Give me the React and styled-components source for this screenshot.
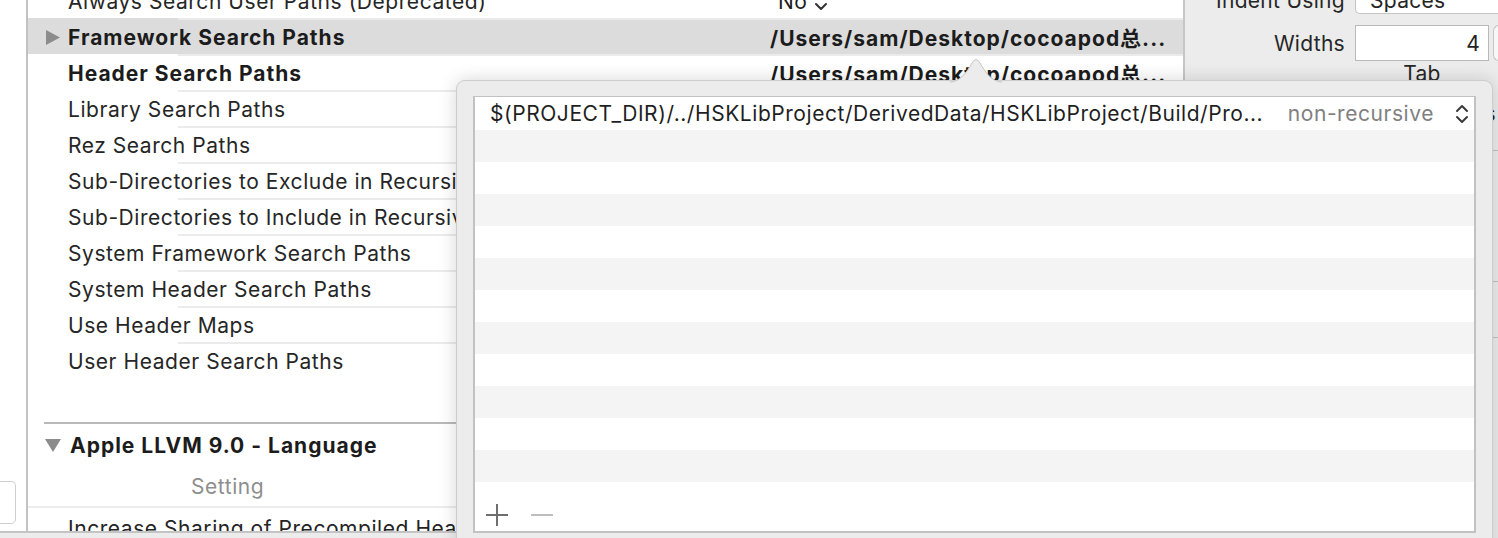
import React from 'react'
import styled, { createGlobalStyle } from 'styled-components'

const GlobalStyle = createGlobalStyle`
  html, body {
    margin: 0;
    padding: 0;
    background: #ffffff;
  }
  body {
    font-family: Inter, "Noto Sans CJK SC", sans-serif;
    color: #242424;
    -webkit-font-smoothing: antialiased;
  }
`

const Page = styled.div`
  position: relative;
  display: flex;
  width: 1498px;
  height: 538px;
  overflow: hidden;
  font-size: 21px;
  letter-spacing: 0.55px;
`
const Workspace = styled.div`
  flex: 1;
  display: flex;
  flex-direction: column;
  min-width: 0;
`
const Body = styled.div`
  flex: 1;
  display: flex;
  min-height: 0;
  overflow: hidden;
`
const Gutter = styled.div`
  width: 28px;
  flex-shrink: 0;
  background: #ffffff;
  border-right: 2px solid #c2c2c2;
  display: flex;
  flex-direction: column;
  justify-content: flex-end;
  padding-bottom: 7px;
  box-sizing: border-box;
`
const GutterField = styled.div`
  width: 16px;
  height: 41px;
  margin-left: -1px;
  background: #fff;
  border: 1px solid #cfcfcf;
  border-left: none;
  border-radius: 0 5px 5px 0;
`
const Editor = styled.div`
  flex: 1;
  min-width: 0;
  background: #ffffff;
  overflow: hidden;
`
const SettingList = styled.div`
  margin-top: -18px;
`
const Row = styled.div`
  display: flex;
  align-items: center;
  height: 36px;
  box-sizing: border-box;
  padding: 2px 0 0 17px;
  white-space: nowrap;
  background-color: ${p => (p.$selected ? '#dcdcdc' : 'transparent')};
  background-image: linear-gradient(#ebebeb, #ebebeb);
  background-repeat: no-repeat;
  background-position: 150px 0;
  background-size: calc(100% - 150px) 2px;
`
const Disclosure = styled.div`
  width: 23px;
  flex-shrink: 0;
  display: flex;
  align-items: center;
`
const Name = styled.div`
  width: 702px;
  flex-shrink: 0;
  overflow: hidden;
  font-weight: ${p => (p.$bold ? 700 : 400)};
  letter-spacing: ${p => (p.$bold ? 1 : 0.55)}px;
  color: ${p => (p.$bold ? '#1c1c1c' : '#262626')};
`
const Value = styled.div`
  display: flex;
  align-items: center;
  gap: 6px;
  padding-left: ${p => (p.$bold ? 0 : 8)}px;
  font-weight: ${p => (p.$bold ? 700 : 400)};
  letter-spacing: ${p => (p.$bold ? 1 : 0.55)}px;
  color: #1c1c1c;
`
const SectionRule = styled.div`
  margin: 44px 0 0 16px;
  height: 2px;
  background: #b9b9b9;
`
const SectionHead = styled.div`
  display: flex;
  align-items: center;
  height: 42px;
  padding-left: 17px;
  font-weight: 700;
  letter-spacing: 1px;
  color: #1c1c1c;
  gap: 9px;
`
const ColumnHead = styled.div`
  height: 40px;
  display: flex;
  align-items: center;
  padding-left: 163px;
  color: #8e8e8e;
  border-bottom: 2px solid #ececec;
  background-image: linear-gradient(#fff, #fff);
  background-repeat: no-repeat;
  background-size: 150px 100%;
  margin-bottom: -2px;
`
const CutRow = styled.div`
  padding: 10px 0 0 40px;
  white-space: nowrap;
`
const ScrollBar = styled.div`
  height: 5px;
  flex-shrink: 0;
  background: #ececec;
  border-top: 2px solid #c4c4c4;
`

const Inspector = styled.div`
  width: 315px;
  flex-shrink: 0;
  box-sizing: border-box;
  background: #ececec;
  border-left: 2px solid #c6c6c6;
  display: flex;
  flex-direction: column;
  letter-spacing: 0.3px;
`
const FieldRow = styled.div`
  display: grid;
  grid-template-columns: 160px 134px 1fr;
  column-gap: 10px;
  align-items: center;
  margin-top: ${p => p.$top || 0}px;
  height: ${p => p.$h || 36}px;
`
const Label = styled.div`
  text-align: right;
  white-space: nowrap;
  color: #262626;
`
const PopupButton = styled.div`
  grid-column: 2 / 4;
  height: 100%;
  box-sizing: border-box;
  background: #fff;
  border: 1px solid #c4c4c4;
  border-right: none;
  border-radius: 5px 0 0 5px;
  padding-left: 14px;
  display: flex;
  align-items: center;
`
const TextField = styled.div`
  height: 100%;
  box-sizing: border-box;
  background: #fff;
  border: 1px solid #b9b9b9;
  display: flex;
  align-items: center;
  justify-content: flex-end;
  padding-right: 8px;
`
const Stepper = styled.div`
  height: 100%;
  box-sizing: border-box;
  margin-left: -6px;
  background: #f7f7f7;
  border: 1px solid #c4c4c4;
  border-right: none;
  border-radius: 6px 0 0 6px;
`
const Caption = styled.div`
  grid-column: 2;
  text-align: center;
  color: #262626;
`
const TailLabel = styled.div`
  margin-top: 16px;
  text-align: right;
  padding-right: 2px;
  white-space: nowrap;
`
const Divider = styled.div`
  height: 1px;
  flex-shrink: 0;
  background: #c4c4c4;
  margin-top: ${p => p.$top}px;
`

const Popover = styled.div`
  position: absolute;
  left: 456px;
  top: 80px;
  width: 1037px;
  height: 480px;
  box-sizing: border-box;
  background: #ececec;
  border: 1px solid #cdcdcd;
  border-radius: 9px;
  box-shadow: 0 0 18px rgba(0, 0, 0, 0.16);
  padding: 15px 16px;
  letter-spacing: 0.55px;
`
const Arrow = styled.svg`
  position: absolute;
  left: 493px;
  top: -26px;
`
const Table = styled.div`
  height: 437px;
  box-sizing: border-box;
  background: #fff;
  border: 2px solid #c2c2c2;
  border-top-width: 1px;
  display: flex;
  flex-direction: column;
`
const TableRow = styled.div`
  height: ${p => p.$h || 32}px;
  flex-shrink: 0;
  background: ${p => (p.$striped ? '#f4f4f4' : '#ffffff')};
  display: flex;
  align-items: center;
  padding: 0 5px 0 15px;
  white-space: nowrap;
`
const PathText = styled.div`
  flex: 1;
  overflow: hidden;
  color: #1f1f1f;
`
const Mode = styled.div`
  color: #808080;
  margin-right: 21px;
`
const Footer = styled.div`
  flex: 1;
  display: flex;
  align-items: flex-end;
  gap: 21px;
  padding: 0 0 4px 10px;
`

const RightTriangle = () => (
  <svg width="16" height="17" viewBox="0 0 16 17">
    <polygon points="1,1 15,8.5 1,16" fill="#8c8c8c" />
  </svg>
)
const DownTriangle = () => (
  <svg width="16" height="15" viewBox="0 0 16 15">
    <polygon points="0,1 16,1 8,14" fill="#8c8c8c" />
  </svg>
)
const UpDown = ({ color = '#333' }) => (
  <svg width="14" height="20" viewBox="0 0 14 20">
    <path d="M2 7 L7 2 L12 7 M2 13 L7 18 L12 13" fill="none" stroke={color} strokeWidth="2" strokeLinecap="round" strokeLinejoin="round" />
  </svg>
)
const PlusIcon = ({ color }) => (
  <svg width="24" height="24" viewBox="0 0 24 24">
    <path d="M1 12 H23 M12 1 V23" stroke={color} strokeWidth="2" />
  </svg>
)
const MinusIcon = ({ color }) => (
  <svg width="24" height="24" viewBox="0 0 24 24">
    <path d="M1 12 H23" stroke={color} strokeWidth="2" />
  </svg>
)

const settings = [
  { name: 'Always Search User Paths (Deprecated)', value: 'No', popup: true },
  { name: 'Framework Search Paths', value: '/Users/sam/Desktop/cocoapod总...', bold: true, selected: true, expandable: true },
  { name: 'Header Search Paths', value: '/Users/sam/Desktop/cocoapod总...', bold: true },
  { name: 'Library Search Paths' },
  { name: 'Rez Search Paths' },
  { name: 'Sub-Directories to Exclude in Recursive Searches' },
  { name: 'Sub-Directories to Include in Recursive Searches' },
  { name: 'System Framework Search Paths' },
  { name: 'System Header Search Paths' },
  { name: 'Use Header Maps' },
  { name: 'User Header Search Paths' },
]

const paths = [
  { path: '$(PROJECT_DIR)/../HSKLibProject/DerivedData/HSKLibProject/Build/Pro...', mode: 'non-recursive' },
]

export default function App() {
  const blankRows = Array.from({ length: 11 })
  return (
    <Page>
      <GlobalStyle />
      <Workspace>
        <Body>
          <Gutter>
            <GutterField />
          </Gutter>
          <Editor>
            <SettingList>
              {settings.map(s => (
                <Row key={s.name} $selected={s.selected}>
                  <Disclosure>{s.expandable && <RightTriangle />}</Disclosure>
                  <Name $bold={s.bold}>{s.name}</Name>
                  {s.value && (
                    <Value $bold={s.bold}>
                      {s.value}
                      {s.popup && <UpDown />}
                    </Value>
                  )}
                </Row>
              ))}
            </SettingList>
            <SectionRule />
            <SectionHead>
              <DownTriangle />
              Apple LLVM 9.0 - Language
            </SectionHead>
            <ColumnHead>Setting</ColumnHead>
            <CutRow>Increase Sharing of Precompiled Headers</CutRow>
          </Editor>
        </Body>
        <ScrollBar />
      </Workspace>

      <Inspector>
        <FieldRow $top={-14} $h={28}>
          <Label>Indent Using</Label>
          <PopupButton>Spaces</PopupButton>
        </FieldRow>
        <FieldRow $top={11}>
          <Label>Widths</Label>
          <TextField>4</TextField>
          <Stepper />
        </FieldRow>
        <FieldRow $h={24}>
          <Caption>Tab</Caption>
        </FieldRow>
        <TailLabel>Indent Tabs</TailLabel>
        <Divider $top={24} />
        <Divider $top={130} />
        <Divider $top={55} />
      </Inspector>

      <Popover>
        <Arrow width="52" height="28" viewBox="0 0 52 28">
          <path d="M0 27 C10 27 17 17 22 8 Q26 1 30 8 C35 17 42 27 52 27 L52 28 L0 28 Z" fill="#ececec" />
          <path d="M0 27 C10 27 17 17 22 8 Q26 1 30 8 C35 17 42 27 52 27" fill="none" stroke="#c6c6c6" strokeWidth="1" />
        </Arrow>
        <Table>
          {paths.map(p => (
            <TableRow key={p.path} $h={33}>
              <PathText>{p.path}</PathText>
              <Mode>{p.mode}</Mode>
              <UpDown color="#3a3a3a" />
            </TableRow>
          ))}
          {blankRows.map((_, i) => (
            <TableRow key={i} $striped={i % 2 === 0} />
          ))}
          <Footer>
            <PlusIcon color="#6e6e6e" />
            <MinusIcon color="#bdbdbd" />
          </Footer>
        </Table>
      </Popover>
    </Page>
  )
}
